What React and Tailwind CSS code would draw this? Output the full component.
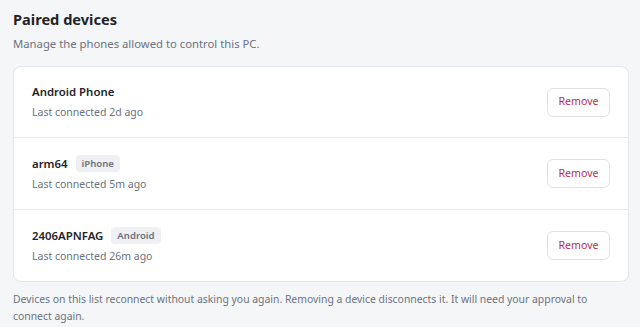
import React from 'react';

const devices = [
  { name: 'Android Phone', badge: null, last: '2d ago' },
  { name: 'arm64', badge: 'iPhone', last: '5m ago' },
  { name: '2406APNFAG', badge: 'Android', last: '26m ago' },
];

export default function App() {
  return (
    <div className="min-h-screen bg-[#f5f6f8] px-[13px] pt-[8px] text-[#1f2328]" style={{ fontFamily: '"Noto Sans", "Open Sans", sans-serif' }}>
      <h2 className="text-[14.6px] font-bold leading-[22px]">Paired devices</h2>
      <p className="mt-[5px] text-[11.3px] leading-[17px] text-[#6b7280]">Manage the phones allowed to control this PC.</p>

      <div className="mt-[14px] w-[616px] rounded-[8px] border border-[#e3e6ea] bg-white">
        {devices.map((d, i) => (
          <div key={d.name}
            className={`flex items-center justify-between px-[18px] ${i > 0 ? 'h-[72px] border-t border-[#e8eaed]' : 'h-[70px]'}`}>
            <div className="flex flex-col gap-[3px]">
              <div className="flex h-[18px] items-center gap-[8px]">
                <span className="text-[11.4px] font-semibold leading-[18px]">{d.name}</span>
                {d.badge && (
                  <span className="rounded-[4px] bg-[#eef0f3] px-[6px] py-[1px] text-[9.6px] font-semibold leading-[15px] text-[#6b7280]">{d.badge}</span>
                )}
              </div>
              <span className="text-[10.5px] leading-[17px] text-[#6b7280]">Last connected {d.last}</span>
            </div>
            <button className="h-[29px] w-[63px] rounded-[6px] border border-[#dfe2e6] bg-white text-[10.6px] text-[#b4304f]">Remove</button>
          </div>
        ))}
      </div>

      <p className="mt-[9px] text-[10.4px] leading-[17px] text-[#6b7280]">
        Devices on this list reconnect without asking you again. Removing a device disconnects it. It will need your approval to connect again.
      </p>
    </div>
  );
}
